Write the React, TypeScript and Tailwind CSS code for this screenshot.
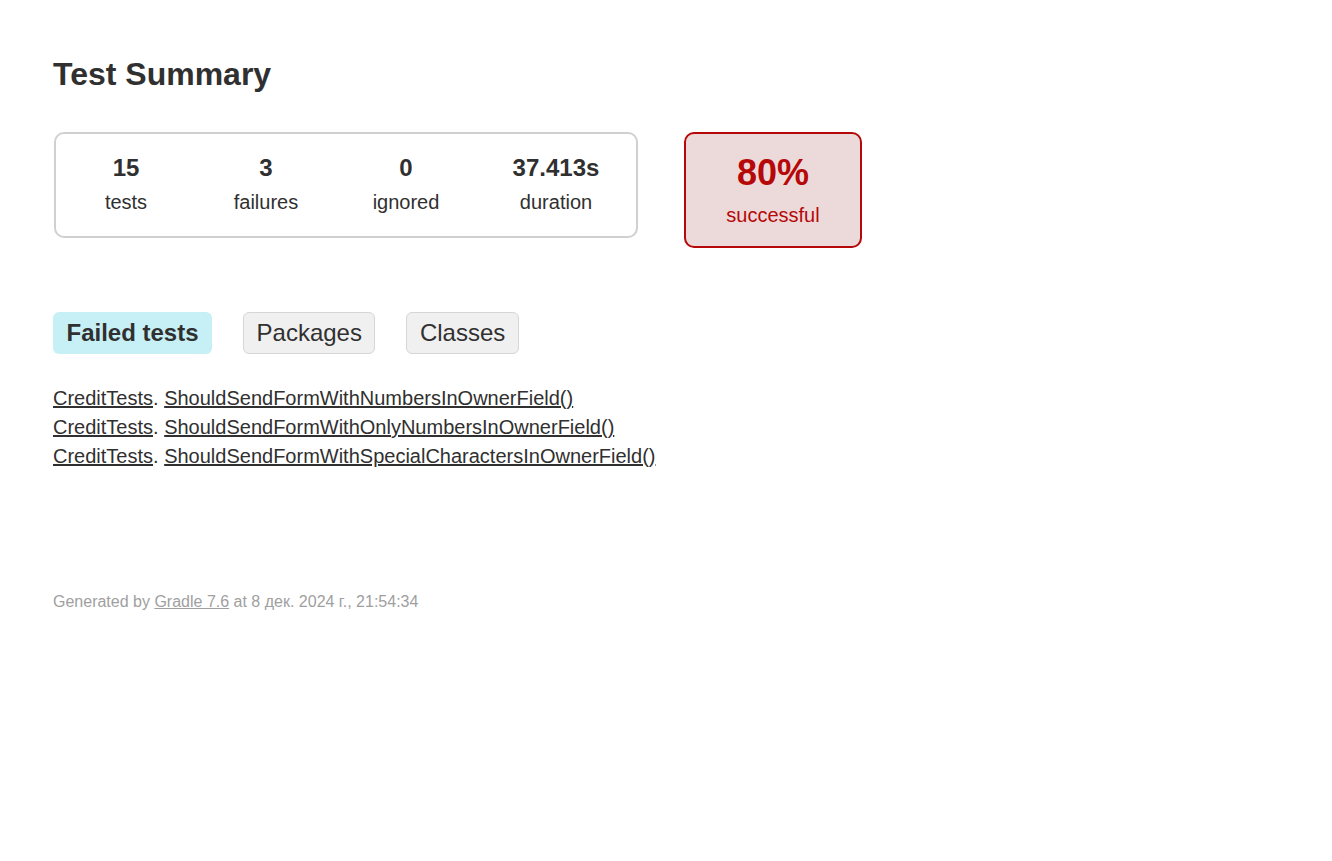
import React from "react";

const COUNTERS = [
  { value: "15", label: "tests", width: "w-[140px]" },
  { value: "3", label: "failures", width: "w-[140px]" },
  { value: "0", label: "ignored", width: "w-[140px]" },
  { value: "37.413s", label: "duration", width: "w-[160px]" },
];

const FAILED = [
  "ShouldSendFormWithNumbersInOwnerField()",
  "ShouldSendFormWithOnlyNumbersInOwnerField()",
  "ShouldSendFormWithSpecialCharactersInOwnerField()",
];

export default function App() {
  return (
    <div className="min-h-[861px] bg-white px-[53px] pt-[56px] font-['Liberation_Sans',Arial,sans-serif] text-[20px] text-[#303030]">
      <h1 className="text-[32px] font-bold leading-[36px]">Test Summary</h1>

      <div className="mt-[40px] flex items-start gap-[46px]">
        <div className="ml-px flex rounded-[10px] border-2 border-[#d0d0d0]">
          {COUNTERS.map((c) => (
            <div key={c.label} className={`${c.width} pt-[20px] pb-[22px] text-center`}>
              <p className="mb-[9px] text-[24px] font-bold leading-[28px]">{c.value}</p>
              <p className="leading-[23px]">{c.label}</p>
            </div>
          ))}
        </div>

        <div className="w-[178px] rounded-[10px] border-2 border-[#b60808] bg-[#ecdada] pt-[18px] pb-[19px] text-center text-[#b60808]">
          <p className="mb-[11px] text-[36px] font-bold leading-[41px]">80%</p>
          <p className="leading-[23px]">successful</p>
        </div>
      </div>

      <div className="mt-[64px] flex gap-[31px] text-[24px] leading-[28px]">
        <div className="rounded-[6px] bg-[#c6f0f6] px-[13.5px] py-[7px] font-bold">Failed tests</div>
        <div className="rounded-[6px] border border-[#d6d6d6] bg-[#f0f0f0] px-[12.5px] py-[6px]">Packages</div>
        <div className="rounded-[6px] border border-[#d6d6d6] bg-[#f0f0f0] px-[12.5px] py-[6px]">Classes</div>
      </div>

      <ul className="mt-[30px]">
        {FAILED.map((name) => (
          <li key={name} className="leading-[29px]">
            <a href="#" className="underline">CreditTests</a>.{" "}
            <a href="#" className="underline">{name}</a>
          </li>
        ))}
      </ul>

      <div className="mt-[122px] whitespace-nowrap text-[16px] leading-[18px] text-[#a0a0a0]">
        Generated by{" "}
        <a href="#" className="underline text-[#a0a0a0]">Gradle 7.6</a> at 8 дек. 2024 г., 21:54:34
      </div>
    </div>
  );
}
